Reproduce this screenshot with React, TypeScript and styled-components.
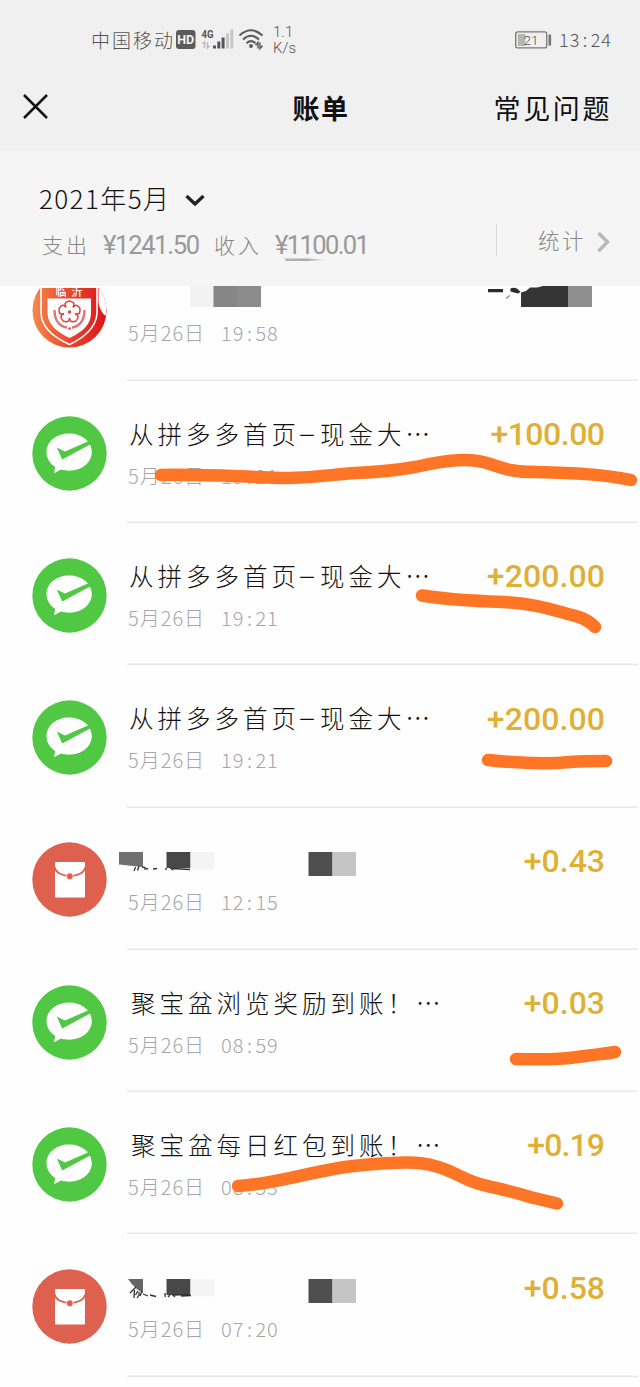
import React from "react";
import styled, { createGlobalStyle } from "styled-components";

const CJK = `"Noto Sans CJK SC", sans-serif`;

const GlobalStyle = createGlobalStyle`
  * { box-sizing: border-box; }
  body { margin: 0; background: #fefefe; font-family: ${CJK}; }
  svg { display: block; flex: none; }
`;

const Screen = styled.main`
  position: relative;
  width: 640px;
  height: 1387px;
  overflow: hidden;
  background: #fefefe;
`;

const TopArea = styled.div`
  height: 151px;
  background: #f0f0f0;
`;

const StatusBar = styled.div`
  display: flex;
  justify-content: space-between;
  height: 66px;
  padding: 14px 28px 0 91px;
  color: #555;
`;

const StatusGroup = styled.div`
  display: flex;
  align-items: center;
  height: 52px;
`;

const Carrier = styled.span`
  width: 85px;
  font-size: 19px;
  font-weight: 300;
  letter-spacing: 2px;
  line-height: 26px;
  white-space: nowrap;
`;

const Speed = styled.div`
  margin-top: -1px;
  font: 300 15px/16px Roboto, sans-serif;
  color: #555;
`;

const Clock = styled.span`
  display: flex;
  width: 53px;
  margin: -2px 0 0 7px;
  font-size: 18px;
  font-weight: 300;
  letter-spacing: 1px;
  line-height: 26px;
`;

const NavBar = styled.header`
  display: grid;
  grid-template-columns: 1fr 60px 1fr;
  align-items: center;
  height: 85px;
  padding: 0 28px 4px 23px;
  color: #111;
`;

const NavTitle = styled.h1`
  margin: 3px 0 0 5px;
  font-size: 27px;
  font-weight: 700;
  letter-spacing: 1.5px;
  line-height: 40px;
  white-space: nowrap;
`;

const NavLink = styled.span`
  justify-self: end;
  margin-top: 3px;
  font-size: 27px;
  letter-spacing: 2.6px;
  line-height: 40px;
  white-space: nowrap;
`;

const Summary = styled.section`
  display: flex;
  justify-content: space-between;
  height: 135px;
  padding: 27px 30px 0 39px;
  background: #f5f5f5;
`;

const Month = styled.div`
  display: flex;
  align-items: center;
  gap: 15px;
  height: 38px;
  font-size: 26px;
  font-weight: 300;
  letter-spacing: 1.4px;
  color: #111;
`;

const MonthChevron = styled.svg`
  margin-top: 6px;
`;

const Totals = styled.div`
  display: flex;
  align-items: center;
  height: 58px;
  padding-left: 3px;
  color: #999;
`;

const TotalLabel = styled.span`
  width: 61px;
  padding-bottom: 3px;
  font-size: 21px;
  font-weight: 300;
  letter-spacing: 3px;
  color: #888;
`;

const TotalValue = styled.span<{ $w: number; $ls: number }>`
  width: ${(p) => p.$w}px;
  font: 400 25.5px/32px Roboto, sans-serif;
  letter-spacing: ${(p) => p.$ls}px;
  white-space: nowrap;
`;

const Stats = styled.div`
  display: flex;
  align-items: center;
  width: 114px;
  height: 32px;
  margin-top: 46px;
  padding-left: 41px;
  border-left: 1px solid #d8d8d8;
  font-size: 21.5px;
  font-weight: 300;
  letter-spacing: 2.5px;
  color: #888;
`;

const StatsLabel = styled.span`
  width: 59px;
  padding-bottom: 1px;
  white-space: nowrap;
`;

const StatsChevron = styled.svg`
  margin-top: 4px;
`;

const List = styled.div`
  height: 1101px;
  overflow: hidden;
  display: flow-root;
`;

const Row = styled.article<{ $partial?: boolean }>`
  display: flex;
  height: 142.25px;
  margin-top: ${(p) => (p.$partial ? "-47.5px" : "0")};
  padding: 34.9px 2px 0 32px;
`;

const Body = styled.div`
  display: grid;
  grid-template-columns: 1fr auto;
  grid-template-rows: 36px 49px 22.25px;
  align-items: center;
  flex: 1;
  margin: 0 0 0 20px;
  padding-right: 34px;
  box-shadow: inset 0 -1.5px #e8e8e8;
`;

const RowTitle = styled.div<{ $indent?: number }>`
  display: flex;
  padding-left: ${(p) => p.$indent ?? 2}px;
  font-size: 24.5px;
  font-weight: 300;
  letter-spacing: 4px;
  line-height: 36px;
  white-space: nowrap;
  color: #111;
`;

const Dash = styled.span`
  width: 20px;
  margin-left: -3px;
  margin-right: 3px;
  text-align: center;
  font-size: 31px;
  letter-spacing: 0;
  line-height: 30px;
`;

const DateText = styled.div`
  display: flex;
  padding-left: 1px;
  font-size: 20px;
  font-weight: 300;
  letter-spacing: 1px;
  line-height: 30px;
  padding-bottom: 1px;
  color: #a6a6a6;
`;

const Day = styled.span`
  width: 93px;
`;

const Colon = styled.span`
  width: 11px;
  text-align: center;
`;

const Amount = styled.div<{ $ls: number }>`
  height: 37px;
  margin-right: ${(p) => -p.$ls - 1}px;
  font: 500 32px/39px Roboto, sans-serif;
  letter-spacing: ${(p) => p.$ls}px;
  color: #dfb036;
`;

const Redaction = styled.svg`
  margin: 8px 0 0 -8px;
  overflow: visible;
`;

const AmountRedaction = styled.svg`
  margin: 8px 11px 0 0;
`;

const Marks = styled.svg`
  position: absolute;
  inset: 0;
  pointer-events: none;
`;

const PayIcon = () => (
  <svg width="75" height="75" viewBox="0 0 75 75">
    <circle cx="37.5" cy="37.5" r="37.2" fill="#51c843" />
    <path d="M37 17.500c12.800 0 22.800 8 22.800 18.500S50 54.700 37 54.700c-2.800 0-5.600-.4-8-1.200L22 57.300l1.200-6.400C17.800 47.500 14.500 42.200 14.500 36 14.500 25.500 24.500 17.500 37 17.500z" fill="#fff" />
    <path d="M24.800 31.500L33 35.500 57 25 59 28 30.200 43.500z" fill="#51c843" />
  </svg>
);

const PacketIcon = () => (
  <svg width="75" height="75" viewBox="0 0 75 75">
    <circle cx="37.500" cy="37.500" r="37.200" fill="#de604e" />
    <rect x="23" y="20" width="30" height="35.500" rx="1" fill="#fff" />
    <path d="M22.500 25C25 37 51 37 53.500 25" fill="none" stroke="#de604e" strokeWidth="1.900" />
    <circle cx="37.800" cy="34.300" r="3.500" fill="#de604e" stroke="#fff" strokeWidth=".8" />
  </svg>
);

const CityBadge = () => (
  <svg width="75" height="75" viewBox="0 0 75 75">
    <defs>
      <linearGradient id="badge" x1="0" x2="1">
        <stop offset="0" stopColor="#f58a4c" />
        <stop offset=".5" stopColor="#e8462f" />
        <stop offset="1" stopColor="#dc1418" />
      </linearGradient>
      <clipPath id="disc"><circle cx="37.500" cy="37.500" r="37" /></clipPath>
      <clipPath id="visible"><rect y="15" width="75" height="60" /></clipPath>
    </defs>
    <g clipPath="url(#visible)">
      <g clipPath="url(#disc)">
        <rect width="75" height="75" fill="url(#badge)" />
        <path d="M66.500 10H75V34L73.500 43C70 40 67 35 66.500 28z" fill="#fefefe" />
        <path d="M9 10V40C9.500 55 23 65 37.500 71.500 52 65 64.500 54 65 40V10" fill="none" stroke="#fff" strokeWidth="1.600" />
      </g>
      <path d="M15.500 25.500H59V40C59 53 48 60 37.500 65 27 60 16 53 15.500 40z" fill="#fff" />
      <text x="23.500" y="22.500" fontSize="11" fontWeight="500" letterSpacing="5" fill="#fff" fontFamily="Noto Sans CJK SC, sans-serif">临沂</text>
      <g fill="none" stroke="#d84542" strokeWidth="1.500">
        {[0, 72, 144, 216, 288].map((a) => (
          <path key={a} d="M34 34.200L33 31.500C33 28.500 35.500 29 37.500 28 39.500 29 42 28.500 42 31.500L41 34.200" transform={`rotate(${a} 37.500 39)`} />
        ))}
        <circle cx="37.500" cy="39" r="1" />
        <path d="M22.500 37C22.500 49 29 54 35 54.500M52.500 37C52.500 49 46 54 40 54.500" strokeWidth="2.400" opacity=".75" />
      </g>
      <circle cx="37.500" cy="55.500" r="1.300" fill="#d84542" />
    </g>
  </svg>
);

const MerchantMask = () => (
  <Redaction width="143" height="24" viewBox="0 0 143 24">
    <path d="M71 0H95V24H71z" fill="#f2f2f2" />
    <path d="M94.500 0H118V24H94.500z" fill="#868686" />
    <path d="M118 0H142V24H118z" fill="#8c8c8c" />
  </Redaction>
);

const AmountMask = () => (
  <AmountRedaction width="105" height="24" viewBox="0 0 105 24">
    <path d="M0 6H15V9.300H0zM22.500 5.500Q28 3 32.500 9L30 10.500 22.500 8.500z" fill="#2b2b2b" />
    <path d="M18 15.500L22 12.500" stroke="#888" strokeWidth="1.300" />
    <path d="M33 24V9.500L38 8 42 4.500H49L67 0H80V24z" fill="#353535" />
    <path d="M80 0H104V24H80z" fill="#8f8f8f" />
  </AmountRedaction>
);

const SenderMask = ({ cut }: { cut?: boolean }) => (
  <Redaction width="240" height="24" viewBox="0 0 240 24">
    {cut ? (
      <path d="M9 0H24V14Q16 10 9 0z" fill="#666" />
    ) : (
      <path d="M0 0H24V15L0 12.500z" fill="#707070" />
    )}
    <path d="M47.500 0H71.500V16H47.500z" fill="#484848" />
    <path d="M71.500 0H95V17.500H71.500z" fill="#f4f4f4" />
    <path d="M189.500 0H213.500V24H189.500z" fill="#4e4e4e" />
    <path d="M213.500 0H237V24H213.500z" fill="#c5c5c5" />
    {cut ? (
      <g fill="none" stroke="#333" strokeWidth="1.300">
        <path d="M17 8L11 14M15.500 11L15 19M19 12L16.500 16M20 13V16L18 19M23 12L21 17M24 15L29 17M31 16L37 17.500M46 14V17L47 17.500M51 16L49 18M53 16L70 15.500M54 16L56 18M62 17L72 16.500" />
      </g>
    ) : (
      <g fill="none" stroke="#333" strokeWidth="1.300">
        <path d="M16.500 15L15 19M20 14L18.500 18.500M23 15L26 15.500V18M27 16.500L29 17M34 17L38 16.500M46 17H48M51 16L54 18M53 16.500L71 17.500" />
      </g>
    )}
  </Redaction>
);

const Timestamp = ({ time }: { time: string }) => {
  const [h, m] = time.split(":");
  return (
    <DateText>
      <Day>5月26日</Day>
      {h}<Colon>:</Colon>{m}
    </DateText>
  );
};

type Entry = {
  kind: "pay" | "packet" | "city";
  title: React.ReactNode;
  indent?: number;
  time: string;
  amount?: string;
  ls?: number;
};

const cashTitle = <>从拼多多首页<Dash>–</Dash>现金大…</>;

const entries: Entry[] = [
  { kind: "city", title: <MerchantMask />, indent: 0, time: "19:58" },
  { kind: "pay", title: cashTitle, time: "19:21", amount: "+100.00", ls: -0.5 },
  { kind: "pay", title: cashTitle, time: "19:21", amount: "+200.00", ls: 0.1 },
  { kind: "pay", title: cashTitle, time: "19:21", amount: "+200.00", ls: 0.1 },
  { kind: "packet", title: <SenderMask />, indent: 0, time: "12:15", amount: "+0.43", ls: 0 },
  { kind: "pay", title: "聚宝盆浏览奖励到账！…", indent: 4, time: "08:59", amount: "+0.03", ls: 0 },
  { kind: "pay", title: "聚宝盆每日红包到账！…", indent: 4, time: "08:53", amount: "+0.19", ls: -0.9 },
  { kind: "packet", title: <SenderMask cut />, indent: 0, time: "07:20", amount: "+0.58", ls: 0 },
];

const icons = { pay: <PayIcon />, packet: <PacketIcon />, city: <CityBadge /> };

export default function App() {
  return (
    <Screen>
      <GlobalStyle />
      <TopArea>
        <StatusBar>
          <StatusGroup>
            <Carrier>中国移动</Carrier>
            <svg width="97" height="24" viewBox="0 0 97 24">
              <rect x="0" y="2" width="19.500" height="19" rx="3" fill="#5c5c5c" />
              <text x="9.700" y="16" textAnchor="middle" fontSize="12.500" fontWeight="700" fill="#f4f4f4" fontFamily="Roboto, sans-serif">HD</text>
              <text x="25.500" y="10" fontSize="11.500" fontWeight="700" textLength="12" lengthAdjust="spacingAndGlyphs" fill="#555" fontFamily="Roboto, sans-serif">4G</text>
              <path d="M28.500 20V14L26.500 16M31.500 14V20L33.500 18" fill="none" stroke="#bbb" strokeWidth="1.500" />
              <path d="M37 17.500h3V20.500h-3zM41.300 13.500h3V20.500h-3zM45.600 9.500h3V20.500h-3z" fill="#555" />
              <path d="M50 5.500h3V20.500h-3zM54.300 1.500h3V20.500h-3z" fill="#c6c6c6" />
              <g fill="none" stroke="#5c5c5c" strokeWidth="2">
                <path d="M63.500 7.500Q75 -3 86.500 7.500M67 11.500Q75 4 83 11.500M70.500 15.200Q75 11 79.500 15.200" />
              </g>
              <circle cx="75" cy="18" r="2" fill="#5c5c5c" />
              <path d="M82 20.500V14.500L79.500 17.200M84 14.500V20.500L86.500 17.800" fill="none" stroke="#5c5c5c" strokeWidth="1.500" />
            </svg>
            <Speed>1.1<br />K/s</Speed>
          </StatusGroup>
          <StatusGroup>
            <svg width="37" height="18" viewBox="0 0 37 18">
              <rect x=".7" y=".9" width="31" height="16" rx="2" fill="none" stroke="#777" strokeWidth="1.300" />
              <rect x="2.800" y="3" width="7.500" height="12" fill="#b5b5b5" />
              <rect x="33.500" y="3.500" width="2.600" height="11" fill="#777" />
              <text x="8.500" y="13.500" fontSize="13.500" textLength="15" fill="#555" fontFamily="Roboto, sans-serif" fontWeight="300">21</text>
            </svg>
            <Clock>13<Colon>:</Colon>24</Clock>
          </StatusGroup>
        </StatusBar>
        <NavBar>
          <svg width="25" height="25" viewBox="0 0 25 25">
            <path d="M1 1L24 24M24 1L1 24" stroke="#111" strokeWidth="2.500" />
          </svg>
          <NavTitle>账单</NavTitle>
          <NavLink>常见问题</NavLink>
        </NavBar>
      </TopArea>
      <Summary>
        <div>
          <Month>
            2021年5月
            <MonthChevron width="20" height="14" viewBox="0 0 20 14">
              <path d="M1.500 3L10 11 18.500 3" fill="none" stroke="#222" strokeWidth="3.400" />
            </MonthChevron>
          </Month>
          <Totals>
            <TotalLabel>支出</TotalLabel>
            <TotalValue $w={111} $ls={-1.3}>¥1241.50</TotalValue>
            <TotalLabel>收入</TotalLabel>
            <TotalValue $w={98} $ls={-1.6}>¥1100.01</TotalValue>
          </Totals>
        </div>
        <Stats>
          <StatsLabel>统计</StatsLabel>
          <StatsChevron width="13" height="22" viewBox="0 0 13 22">
            <path d="M1.500 2L10.500 11 1.500 20" fill="none" stroke="#b8b8b8" strokeWidth="3.500" />
          </StatsChevron>
        </Stats>
      </Summary>
      <List>
        {entries.map((e, i) => (
          <Row key={i} $partial={i === 0}>
            {icons[e.kind]}
            <Body>
              <RowTitle $indent={e.indent}>{e.title}</RowTitle>
              {e.kind === "city" ? <AmountMask /> : <Amount $ls={e.ls ?? 0}>{e.amount}</Amount>}
              <Timestamp time={e.time} />
            </Body>
          </Row>
        ))}
      </List>
      <Marks width="640" height="1387" viewBox="0 0 640 1387">
        <defs>
          <linearGradient id="fade">
            <stop offset="0" stopColor="#b5b5b5" />
            <stop offset=".5" stopColor="#aaa" />
            <stop offset="1" stopColor="#aaa" stopOpacity="0" />
          </linearGradient>
        </defs>
        <path d="M284 258.500H308L329 260 308 261H286z" fill="url(#fade)" />
        <g fill="none" stroke="#ff7526" strokeWidth="12.500" strokeLinecap="round" strokeLinejoin="round">
          <path d="M161 475C205 474 240 477 290 478C325 477 335 474 355 473C382 472 393 471 415 467C447 460 470 457 490 464C508 470 515 472 536 472C572 473 602 474 631 480" />
          <path d="M422 595.500C450 600 475 601 503 602C540 604 555 611 579 617C585 619 590 622 595 627" />
          <path d="M488 760C525 764 550 764 570 762C583 761 593 761 606 761" />
          <path d="M516 1059C550 1060 565 1059 585 1056C598 1054 605 1054 615 1052" />
          <path d="M238 1186C275 1184 305 1173 345 1167C375 1163 392 1163 405 1162.500C430 1162 446 1169 460 1176C480 1187 495 1186 530 1197L557 1203.500" />
        </g>
      </Marks>
    </Screen>
  );
}
